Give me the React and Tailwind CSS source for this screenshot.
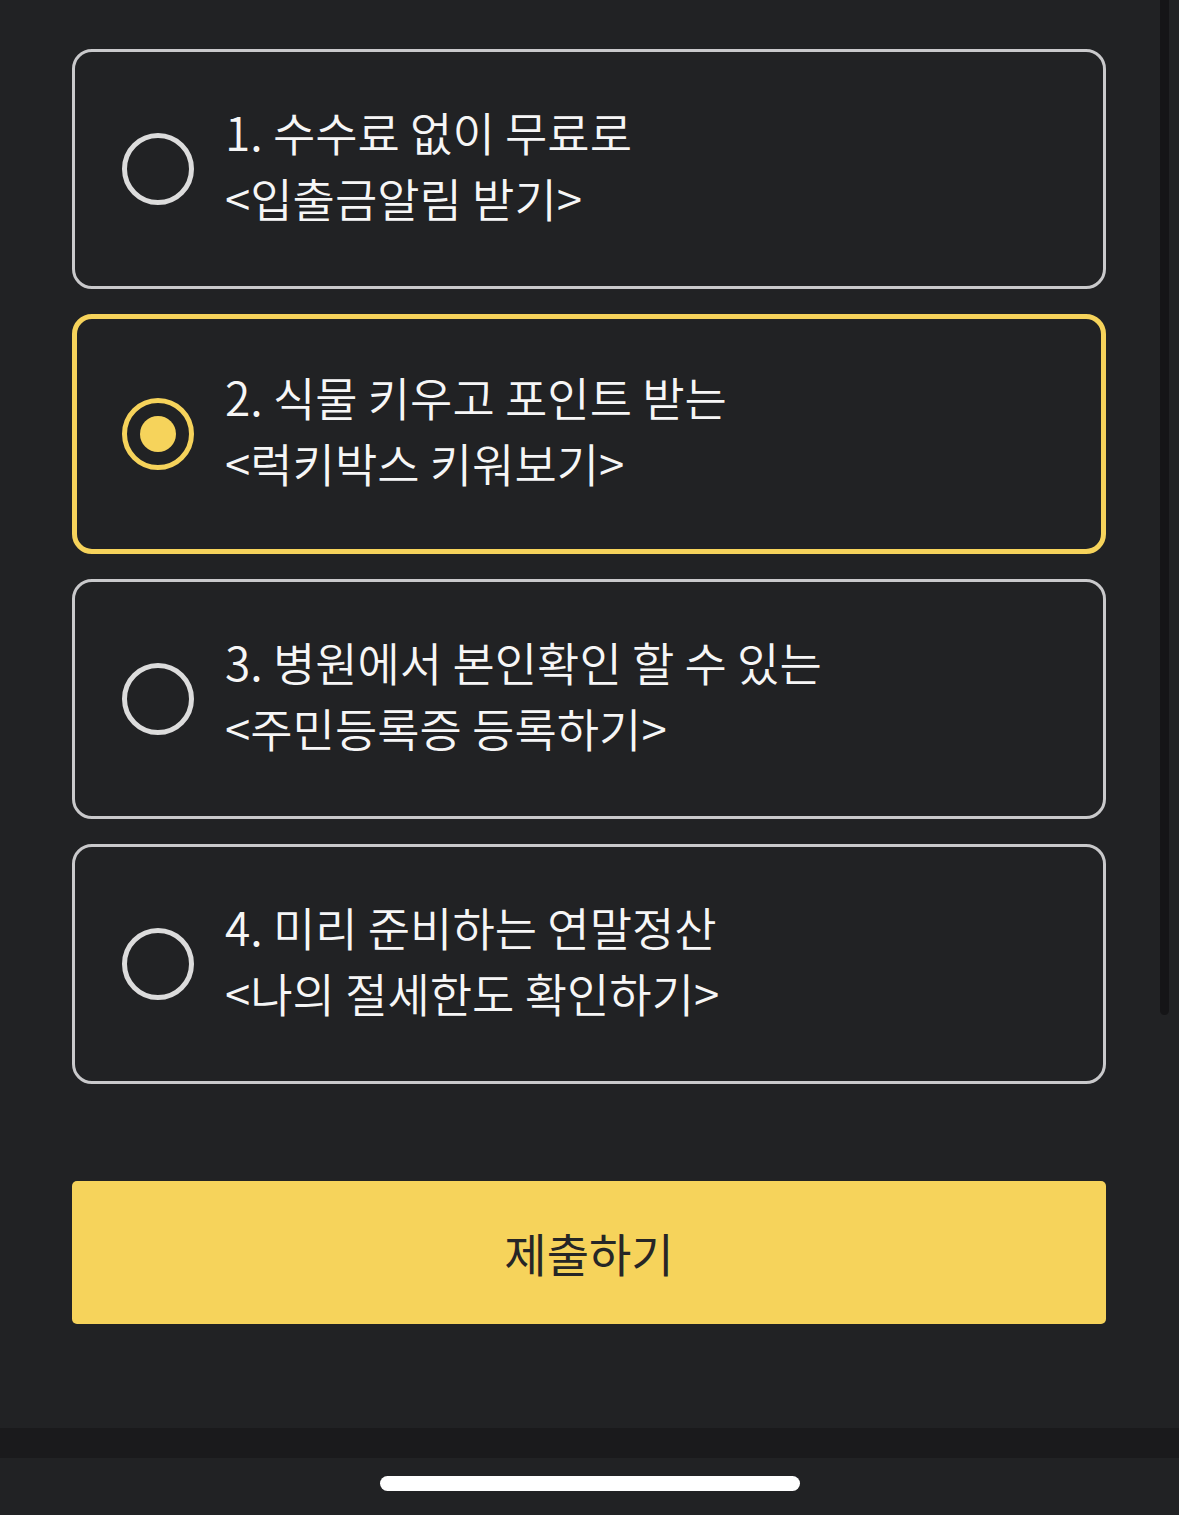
import React, { useState } from 'react';

// ===== Options =====
const OPTIONS = [
  { id: 1, title: '1. 수수료 없이 무료로', sub: '<입출금알림 받기>' },
  { id: 2, title: '2. 식물 키우고 포인트 받는', sub: '<럭키박스 키워보기>' },
  { id: 3, title: '3. 병원에서 본인확인 할 수 있는', sub: '<주민등록증 등록하기>' },
  { id: 4, title: '4. 미리 준비하는 연말정산', sub: '<나의 절세한도 확인하기>' },
];

// ===== Radio Mark =====
function Radio({ checked }) {
  return (
    <div
      className={`w-[72px] h-[72px] rounded-full border-[5px] flex items-center justify-center shrink-0
        ${checked ? 'border-[#f6d35b]' : 'border-[#dcdcdc]'}`}
    >
      {checked && <div className="w-[36px] h-[36px] rounded-full bg-[#f6d35b]" />}
    </div>
  );
}

// ===== Option Card =====
function OptionCard({ item, checked, onSelect }) {
  return (
    <button
      onClick={onSelect}
      className={`w-full h-[240px] flex items-center gap-[31px] rounded-[20px] text-left
        ${checked ? 'border-[5px] border-[#f6d35b] pl-[45px]' : 'border-[3px] border-[#c9c9cb] pl-[47px]'}`}
    >
      <Radio checked={checked} />
      <div className="text-[46px] leading-[66px] font-[350] text-[#f6f6f6] -mt-[10px]">
        <div>{item.title}</div>
        <div>{item.sub}</div>
      </div>
    </button>
  );
}

export default function App() {
  const [selected, setSelected] = useState(2);

  return (
    <div
      className="relative min-h-[1515px] flex flex-col bg-[#212224]"
      style={{ fontFamily: '"Noto Sans CJK KR", "Noto Sans", sans-serif' }}
    >
      {/* Scrollbar */}
      <div className="absolute right-[10px] top-0 w-[9px] h-[1015px] rounded-b-full bg-[#151517]" />

      {/* Options */}
      <div className="flex flex-col gap-[25px] pl-[72px] pt-[49px] pr-[73px]">
        {OPTIONS.map(item => (
          <OptionCard
            key={item.id}
            item={item}
            checked={selected === item.id}
            onSelect={() => setSelected(item.id)}
          />
        ))}
      </div>

      {/* Submit */}
      <div className="pl-[72px] pr-[73px] mt-[97px]">
        <button className="w-full h-[143px] rounded-[5px] bg-[#f6d35b] text-[#262626] text-[46px] font-normal flex items-center justify-center">
          제출하기
        </button>
      </div>

      <div className="flex-1" />

      {/* Bottom Bars */}
      <div className="h-[30px] bg-[#1a1a1c]" />
      <div className="h-[57px] flex justify-center pt-[18px]">
        <div className="w-[420px] h-[15px] rounded-full bg-white" />
      </div>
    </div>
  );
}
